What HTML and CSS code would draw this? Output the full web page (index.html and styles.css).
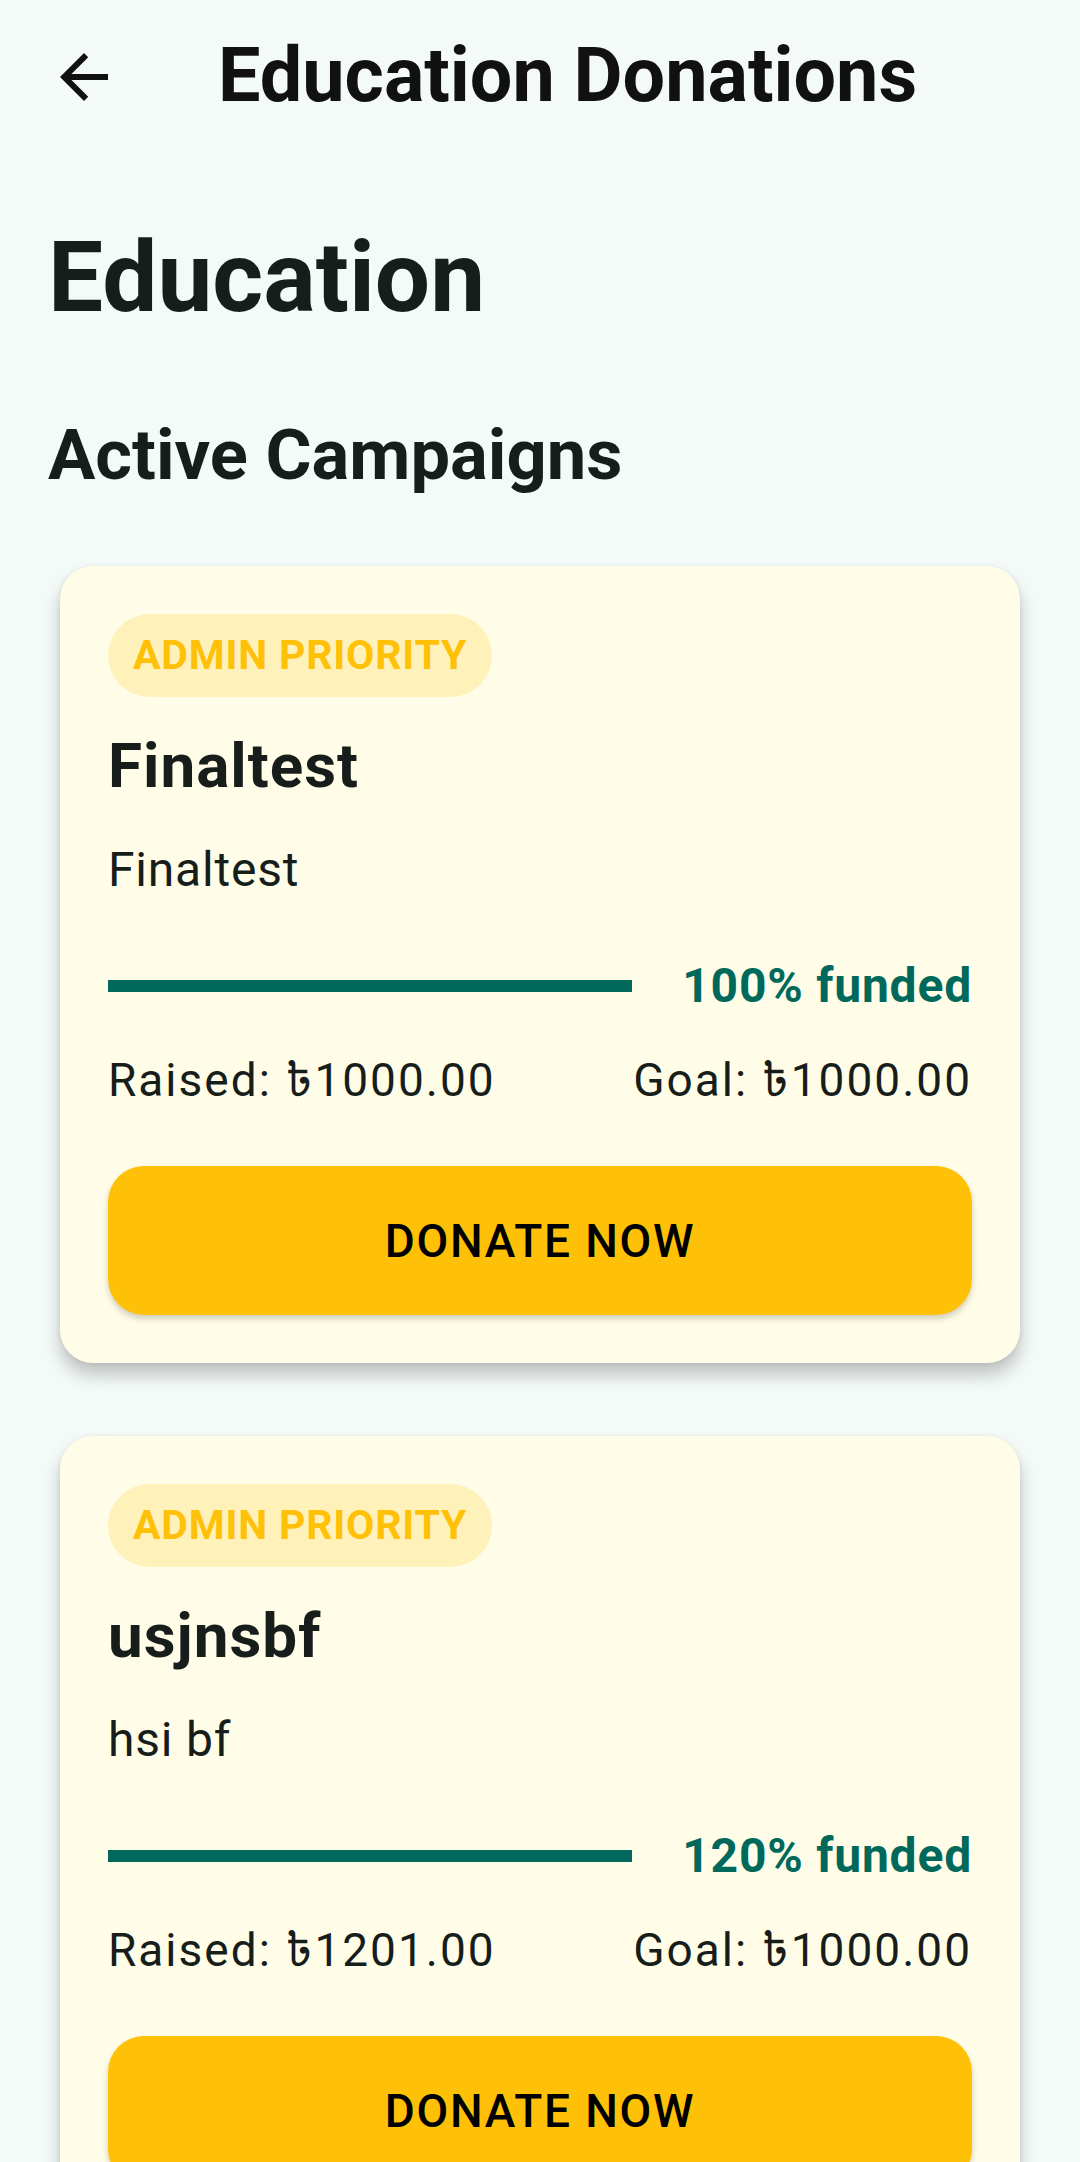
FILE: index.html
```html
<!DOCTYPE html>
<html lang="en">
<head>
<meta charset="utf-8">
<title>Education Donations</title>
<link rel="stylesheet" href="styles.css">
</head>
<body>
<header class="appbar">
  <button class="back" aria-label="Back">
    <svg viewBox="0 0 24 24" width="72" height="72"><path d="M20 11H7.83l5.59-5.59L12 4l-8 8 8 8 1.41-1.41L7.83 13H20v-2z" fill="#111"/></svg>
  </button>
  <h1 class="appbar-title">Education Donations</h1>
</header>
<main class="content">
  <h2 class="category">Education</h2>
  <h3 class="section">Active Campaigns</h3>

  <article class="card">
    <span class="badge">ADMIN PRIORITY</span>
    <h4 class="card-title">Finaltest</h4>
    <p class="card-desc">Finaltest</p>
    <div class="progress-row">
      <div class="track"><div class="fill" style="width:100%"></div></div>
      <span class="funded">100% funded</span>
    </div>
    <div class="amounts">
      <span>Raised: ৳1000.00</span>
      <span>Goal: ৳1000.00</span>
    </div>
    <button class="donate">DONATE NOW</button>
  </article>

  <article class="card">
    <span class="badge">ADMIN PRIORITY</span>
    <h4 class="card-title">usjnsbf</h4>
    <p class="card-desc">hsi bf</p>
    <div class="progress-row">
      <div class="track"><div class="fill" style="width:100%"></div></div>
      <span class="funded">120% funded</span>
    </div>
    <div class="amounts">
      <span>Raised: ৳1201.00</span>
      <span>Goal: ৳1000.00</span>
    </div>
    <button class="donate">DONATE NOW</button>
  </article>
</main>
</body>
</html>
```
FILE: styles.css
```css
html, body {
  margin: 0;
  padding: 0;
}
body {
  width: 1080px;
  min-height: 2162px;
  background: #F4FAF8;
  font-family: Roboto, "Noto Sans", "Noto Sans Bengali", "DejaVu Sans", sans-serif;
  color: #171D1B;
  overflow: hidden;
}
.appbar {
  height: 150px;
  display: flex;
  align-items: center;
}
.back {
  width: 72px;
  height: 72px;
  margin-left: 48px;
  margin-top: 4px;
  padding: 0;
  border: 0;
  background: none;
  display: flex;
}
.appbar-title {
  margin: 0 0 0 98px;
  font-size: 75.5px;
  font-weight: 700;
  line-height: 150px;
  color: #111;
}
.content {
  padding: 0 48px;
}
.category {
  margin: 70px 0 0;
  font-size: 98px;
  font-weight: 700;
  line-height: 116px;
}
.section {
  margin: 77px 0 0;
  font-size: 70.5px;
  font-weight: 700;
  line-height: 84px;
}
.card {
  margin: 69px 12px 73px;
  padding: 48px;
  background: #FFFDE7;
  border-radius: 33px;
  box-shadow: 0 12px 18px rgba(0, 0, 0, 0.22), 0 1px 5px rgba(0, 0, 0, 0.08);
  display: flex;
  flex-direction: column;
  align-items: flex-start;
}
.card + .card {
  margin-top: 0;
}
.badge {
  height: 83px;
  line-height: 83px;
  padding: 0 25px;
  border-radius: 42px;
  background: #FFF1BA;
  color: #FFC107;
  font-size: 41px;
  font-weight: 700;
  letter-spacing: 0.8px;
}
.card-title {
  margin: 33px 0 0;
  font-size: 62px;
  font-weight: 700;
  line-height: 72px;
  letter-spacing: 1px;
}
.card-desc {
  margin: 39px 0 0;
  font-size: 48px;
  line-height: 58px;
  letter-spacing: 0.8px;
}
.progress-row {
  margin-top: 58px;
  align-self: stretch;
  display: flex;
  align-items: center;
  gap: 50px;
}
.track {
  flex: 1;
  height: 12px;
  background: #CDE8E2;
}
.fill {
  height: 100%;
  background: #00695C;
}
.funded {
  font-size: 48px;
  line-height: 58px;
  font-weight: 700;
  letter-spacing: 0.8px;
  color: #00695C;
}
.amounts {
  margin-top: 37px;
  align-self: stretch;
  display: flex;
  justify-content: space-between;
  font-size: 46px;
  line-height: 56px;
  letter-spacing: 2px;
}
.donate {
  margin-top: 58px;
  align-self: stretch;
  height: 149px;
  border: 0;
  border-radius: 36px;
  background: #FFC107;
  color: #000;
  font-family: Roboto, sans-serif;
  font-size: 46px;
  font-weight: 500;
  letter-spacing: 1.8px;
  box-shadow: 0 4px 6px rgba(0, 0, 0, 0.18);
}
```
